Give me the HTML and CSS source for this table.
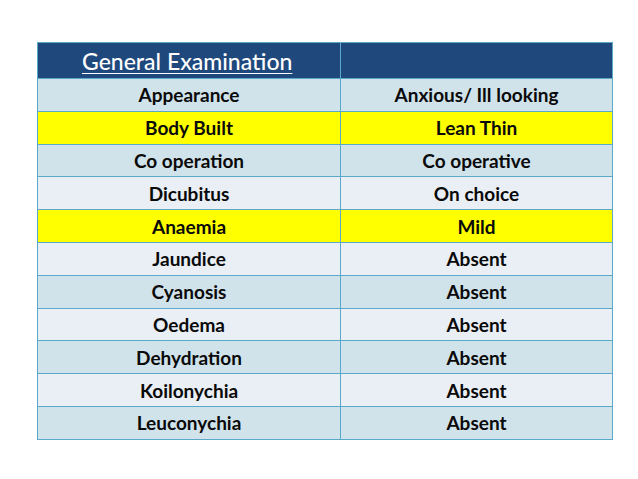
FILE: index.html
```html
<!DOCTYPE html>
<html>
<head>
<meta charset="utf-8">
<link rel="stylesheet" href="styles.css">
</head>
<body>
<table class="exam">
  <colgroup><col class="c1"><col class="c2"></colgroup>
  <tr class="head"><th class="title"><span>General Examination</span></th><th></th></tr>
  <tr class="dark"><td>Appearance</td><td>Anxious/ Ill looking</td></tr>
  <tr class="yellow"><td>Body Built</td><td>Lean Thin</td></tr>
  <tr class="dark"><td>Co operation</td><td>Co operative</td></tr>
  <tr class="light"><td>Dicubitus</td><td>On choice</td></tr>
  <tr class="yellow"><td>Anaemia</td><td>Mild</td></tr>
  <tr class="light"><td>Jaundice</td><td>Absent</td></tr>
  <tr class="dark"><td>Cyanosis</td><td>Absent</td></tr>
  <tr class="light"><td>Oedema</td><td>Absent</td></tr>
  <tr class="dark"><td>Dehydration</td><td>Absent</td></tr>
  <tr class="light"><td>Koilonychia</td><td>Absent</td></tr>
  <tr class="dark"><td>Leuconychia</td><td>Absent</td></tr>
</table>
</body>
</html>
```
FILE: styles.css
```css
html, body {
  margin: 0;
  padding: 0;
  background: #ffffff;
}
body {
  padding: 42px 0 0 37px;
  font-family: Lato, "Open Sans", sans-serif;
}
.exam {
  border-collapse: collapse;
  width: 575px;
  table-layout: fixed;
}
.c1 { width: 303px; }
.c2 { width: 272px; }
.exam th, .exam td {
  border: 1px solid #5aa9c8;
  padding: 0;
  text-align: center;
  vertical-align: middle;
}
.head th {
  background: #1f497d;
  height: 35px;
  color: #ffffff;
}
.head .title {
  text-align: left;
  padding-left: 44px;
  font-size: 23px;
  font-weight: 500;
}
.head .title span {
  text-decoration: underline;
  text-decoration-thickness: 1px;
  text-underline-offset: 3px;
}
.exam td {
  height: 31.8px;
  font-size: 19px;
  font-weight: 700;
  color: #0a0a0a;
}
.dark td { background: #d0e3ea; }
.light td { background: #e9eff5; }
.yellow td { background: #ffff00; }
```
